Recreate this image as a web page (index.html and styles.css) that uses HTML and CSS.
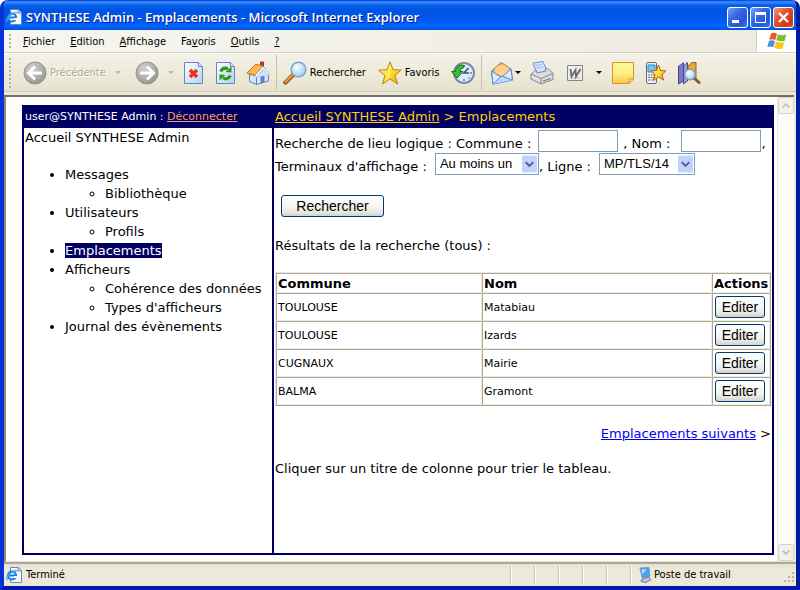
FILE: index.html
```html
<!DOCTYPE html>
<html lang="fr">
<head>
<meta charset="utf-8">
<title>SYNTHESE Admin - Emplacements</title>
<link rel="stylesheet" href="styles.css">
</head>
<body>
<svg class="defs" width="0" height="0" aria-hidden="true">
  <defs>
    <radialGradient id="disc" cx=".4" cy=".3" r=".8"><stop offset="0" stop-color="#d2d2d0"/><stop offset=".6" stop-color="#aaaaa8"/><stop offset="1" stop-color="#8b8b89"/></radialGradient>
    <linearGradient id="sheet" x2="1" y2="1"><stop offset="0" stop-color="#fff"/><stop offset="1" stop-color="#b4d0f4"/></linearGradient>
    <radialGradient id="lens" cx=".4" cy=".35" r=".7"><stop offset="0" stop-color="#fff"/><stop offset="1" stop-color="#8fd0f8"/></radialGradient>
    <linearGradient id="gold" x2="1" y2="1"><stop offset="0" stop-color="#fff6a0"/><stop offset=".5" stop-color="#ffe030"/><stop offset="1" stop-color="#f0a010"/></linearGradient>
    <linearGradient id="note" x2="0" y2="1"><stop offset="0" stop-color="#fff49a"/><stop offset=".5" stop-color="#fff08a"/><stop offset="1" stop-color="#ffc64a"/></linearGradient>
    <symbol id="ie" viewBox="0 0 16 16">
      <path d="M4.500 .5h8l3 3v12h-11z" fill="#f4f8ff" stroke="#6f86b8"/>
      <path d="M12 .5v3.500h3.500" fill="#c8d8f0" stroke="#6f86b8"/>
      <circle cx="6" cy="8.500" r="4" fill="#e8f6ff" stroke="#1c7ad8" stroke-width="2.200"/>
      <path d="M2 8.500h8" stroke="#1c7ad8" stroke-width="2"/>
      <path d="M8 10h4" stroke="#f4f8ff" stroke-width="2"/>
      <path d="M1 13C-.5 9 8 2 11.500 4" fill="none" stroke="#38a8f0" stroke-width="1.300"/>
    </symbol>
  </defs>
</svg>
<div class="window">
  <header class="titlebar">
    <svg class="i16" viewBox="0 0 16 16"><use href="#ie"/></svg>
    <h1>SYNTHESE Admin - Emplacements - Microsoft Internet Explorer</h1>
    <div class="winbtns">
      <button type="button" aria-label="Réduire"><svg viewBox="0 0 19 19"><path d="M4 12h7v3H4z" fill="#fff"/></svg></button>
      <button type="button" aria-label="Agrandir"><svg viewBox="0 0 19 19"><path d="M4 4h11v11H4zM5 7v7h9V7z" fill="#fff" fill-rule="evenodd"/></svg></button>
      <button type="button" class="close" aria-label="Fermer"><svg viewBox="0 0 19 19"><path d="M5 5l9 9M14 5l-9 9" stroke="#fff" stroke-width="2.400"/></svg></button>
    </div>
  </header>

  <nav class="menubar" aria-label="Menu">
    <span class="grip"></span>
    <button type="button"><u>F</u>ichier</button>
    <button type="button"><u>E</u>dition</button>
    <button type="button"><u>A</u>ffichage</button>
    <button type="button">Fa<u>v</u>oris</button>
    <button type="button"><u>O</u>utils</button>
    <button type="button"><u>?</u></button>
    <span class="throbber">
      <svg width="20" height="18" viewBox="0 0 20 18">
        <path d="M4 1.500Q7 0 10 1.700L8.300 8Q5.500 6.500 2.300 7.800Z" fill="#e8592a"/>
        <path d="M11 2.300Q14.500 4 19.500 2.500L17.500 9Q13.500 10 9.300 8.300Z" fill="#7cc02c"/>
        <path d="M2 8.800Q5 7.500 8 9L6.300 15.300Q3.500 13.800 .3 15Z" fill="#4a90e8"/>
        <path d="M9 9.500Q13 11 17.200 10.200L15.500 16.500Q11.500 18 7.300 15.700Z" fill="#fcc818"/>
      </svg>
    </span>
  </nav>

  <div class="toolbar" role="toolbar" aria-label="Boutons standard">
    <span class="grip"></span>
    <div class="group history">
      <button type="button" disabled><svg viewBox="0 0 24 24"><circle cx="12" cy="12" r="11" fill="url(#disc)" stroke="#91918f"/><path d="M12 5.500L5.500 12l6.500 6.500M6 12h13" fill="none" stroke="#fff" stroke-width="3"/></svg><span>Précédente</span><i class="caret"></i></button>
      <button type="button" disabled aria-label="Suivante"><svg viewBox="0 0 24 24"><circle cx="12" cy="12" r="11" fill="url(#disc)" stroke="#91918f"/><path d="M12 5.500l6.500 6.500-6.500 6.500M18 12H5" fill="none" stroke="#fff" stroke-width="3"/></svg><i class="caret"></i></button>
    </div>
    <div class="group">
      <button type="button" aria-label="Arrêter"><svg viewBox="0 0 24 24"><path d="M2.500 1.500h14l4 4v17h-18z" fill="url(#sheet)" stroke="#5f87bd"/><path d="M16.500 1.500v4h4" fill="#dcebff" stroke="#5f87bd"/><path d="M8 9l7 7M15 9l-7 7" stroke="#e83410" stroke-width="3.400"/></svg></button>
      <button type="button" aria-label="Actualiser"><svg viewBox="0 0 24 24"><path d="M2.500 1.500h14l4 4v17h-18z" fill="url(#sheet)" stroke="#5f87bd"/><path d="M16.500 1.500v4h4" fill="#dcebff" stroke="#5f87bd"/><path d="M6.500 10.500q3-5 7.500-2.500" fill="none" stroke="#2c9a18" stroke-width="3"/><path d="M11.500 11l6 .5V5.500z" fill="#2c9a18"/><path d="M16.500 14.500q-3 5-7.500 2.500" fill="none" stroke="#2c9a18" stroke-width="3"/><path d="M11.500 14l-6-.5v6z" fill="#2c9a18"/></svg></button>
      <button type="button" aria-label="Démarrage"><svg viewBox="0 0 24 24"><path d="M14.500 1h3v6h-3z" fill="#d84020" stroke="#9a3018"/><path d="M3.500 13v7.500l7 3V15zM10.500 23.500V14L17 6.500l5.500 7V20z" fill="#d4e5fc" stroke="#5e82b8"/><path d="M.8 12L10 3.200l7 2L9 14.500z" fill="#ffb54c" stroke="#c57316"/><path d="M17 5.200l6.500 8-1.500 1.300-5-6-6.500 8L9 14.500z" fill="#fff" stroke="#7898c8" stroke-width=".7"/><path d="M14.500 15.500l4-1v6.800l-4 1z" fill="#637fb8"/></svg></button>
    </div>
    <span class="sep"></span>
    <div class="group wide">
      <button type="button"><svg viewBox="0 0 24 24"><path d="M10 14l-7.500 7.500" stroke="#a65a1c" stroke-width="4.500" stroke-linecap="round"/><path d="M9.500 14L2.700 20.800" stroke="#ef9a4c" stroke-width="2" stroke-linecap="round"/><circle cx="15.500" cy="8.500" r="7.300" fill="url(#lens)" stroke="#7fa1cf" stroke-width="1.500"/></svg><span>Rechercher</span></button>
      <button type="button"><svg viewBox="0 0 24 24"><path d="M12 .8l3 7.900 8.300.3-6.400 5.300 2.700 8.700L12 18l-7.500 5 2.400-8.600L.7 9.200 9 8.800z" fill="url(#gold)" stroke="#bd8114"/><path d="M12 4v13l-5 3.500 2-6.500z" fill="#fff" opacity=".35"/></svg><span>Favoris</span></button>
      <button type="button" aria-label="Historique"><svg viewBox="0 0 24 24"><circle cx="13" cy="12" r="10" fill="#d8edfb" stroke="#758caf" stroke-width="2"/><path d="M13 4v2M21 12h-2M13 20v-2M18.500 17.500l-1-1" stroke="#c25840" stroke-width="1.500"/><path d="M17.500 7L13 12h5" fill="none" stroke="#39557c" stroke-width="1.700"/><path d="M13 4.500C8 3 4.500 6 4.500 10.500H.5L6 17l6-6.500H9Q9 7 13 6.500z" fill="#46b53a" stroke="#187018"/></svg></button>
    </div>
    <span class="sep"></span>
    <div class="group mail">
      <button type="button" aria-label="Courrier"><svg viewBox="0 0 24 24"><path d="M1.500 10L11 1.500 21 8l1.500 11L3 23z" fill="#aecbfa" stroke="#5f87ca"/><path d="M4 8q5-6 10-5l6 5-1 5-7 3-8-4z" fill="#ffd08b" stroke="#d28d3e"/><path d="M1.500 10l10 6.500L21 8l1.500 11L3 23z" fill="#dceaff" stroke="#5f87ca"/><path d="M3 23l8.500-8 11 4" fill="#bdd6ff" stroke="#5f87ca"/></svg><i class="caret"></i></button>
      <button type="button" aria-label="Imprimer"><svg viewBox="0 0 24 24"><path d="M3 2l10-1.500L17 10 7 13z" fill="#cce2ff" stroke="#7297ce"/><path d="M5 4.500l7-1M6 7l7-1" stroke="#a3c2ee"/><path d="M1 13l5-4 1 3 9-2-1-2 3-.5 5 5v6L11 23 1 18z" fill="#dedee2" stroke="#85858d"/><path d="M1 13l10 4.500 12-5M11 17.500V23" fill="none" stroke="#85858d"/><path d="M13 20l8-2.500" stroke="#707078"/></svg></button>
      <button type="button" aria-label="Modifier"><svg viewBox="0 0 24 24"><path d="M4.500 4.500h15v15h-15z" fill="#ececea" stroke="#85858b"/><path d="M7 17h10" stroke="#bdbdbd"/><path d="M7.500 8l1 7.500 4-6.500.5 6.500L17.500 8" fill="none" stroke="#686870" stroke-width="1.800"/></svg><i class="caret far"></i></button>
      <button type="button" aria-label="Discussion"><svg viewBox="0 0 24 24"><path d="M1.500 1.500h21V18L18 22.500H1.500z" fill="url(#note)" stroke="#d9971e"/><path d="M22.500 18H18v4.500z" fill="#fff2a8" stroke="#d9971e"/></svg></button>
      <button type="button" aria-label="Périphérique mobile"><svg viewBox="0 0 24 24"><rect x="2.500" y="1.500" width="10" height="21" rx="1.500" fill="#edf0f4" stroke="#626d7e"/><path d="M4 4h7v7H4z" fill="#6fc8f2" stroke="#3d87bc"/><path d="M4 14h7M4 16.500h7M4 19h7" stroke="#6d7582" stroke-dasharray="2 .5"/><path d="M14.500 4l2 5.500 5.500.3-4 3.800 1.500 5.400-5-3-5 3 1.500-5.400-4-3.800 5.500-.3z" fill="url(#gold)" stroke="#bd5b18"/></svg></button>
      <button type="button" aria-label="Recherche"><svg viewBox="0 0 24 24"><path d="M1.500 5l5-3.500V20l-5 3z" fill="#7777c6" stroke="#484892"/><path d="M6.500 5l4-3.500V20l-4 3z" fill="#9a9adf" stroke="#484892"/><path d="M1.500 4.500L6 1h4.500" stroke="#dadaf7" fill="none"/><path d="M11 5l4-3.500h4V18h-8z" fill="#e5a83a" stroke="#976417"/><path d="M17 17l5 4.500" stroke="#8b5a22" stroke-width="3" stroke-linecap="round"/><circle cx="13" cy="13.500" r="5.300" fill="url(#lens)" stroke="#8195b0" stroke-width="1.300"/></svg></button>
    </div>
  </div>

  <div class="viewport">
    <main class="page">
      <div class="topline user">user@SYNTHESE Admin : <a href="#">Déconnecter</a></div>
      <div class="topline crumbs"><a href="#">Accueil SYNTHESE Admin</a> &gt; Emplacements</div>
      <aside class="tree">
        <div>Accueil SYNTHESE Admin</div>
        <ul>
          <li>Messages<ul><li>Bibliothèque</li></ul></li>
          <li>Utilisateurs<ul><li>Profils</li></ul></li>
          <li><mark>Emplacements</mark></li>
          <li>Afficheurs<ul><li>Cohérence des données</li><li>Types d'afficheurs</li></ul></li>
          <li>Journal des évènements</li>
        </ul>
      </aside>
      <section class="content">
        <form class="search">
          <div class="row"><label for="commune">Recherche de lieu logique : Commune :</label><input id="commune" type="text"><label for="nom">, Nom :</label><input id="nom" class="last" type="text"><span class="comma">,</span></div>
          <div class="row"><label for="term">Terminaux d'affichage :</label><span class="pick"><select id="term" class="long"><option>Au moins un</option></select><svg viewBox="0 0 16 18"><rect width="16" height="18" rx="1" fill="#c1d3fb"/><path d="M4 7l4 4 4-4" fill="none" stroke="#4d6185" stroke-width="2.200"/></svg></span><label for="ligne">, Ligne :</label><span class="pick"><select id="ligne"><option>MP/TLS/14</option></select><svg viewBox="0 0 16 18"><rect width="16" height="18" rx="1" fill="#c1d3fb"/><path d="M4 7l4 4 4-4" fill="none" stroke="#4d6185" stroke-width="2.200"/></svg></span></div>
          <button class="xp submit" type="button">Rechercher</button>
        </form>
        <p class="results">Résultats de la recherche (tous) :</p>
        <table>
          <colgroup><col class="c1"><col><col class="c3"></colgroup>
          <thead><tr><th>Commune</th><th>Nom</th><th>Actions</th></tr></thead>
          <tbody>
            <tr><td>TOULOUSE</td><td>Matabiau</td><td><button class="xp" type="button">Editer</button></td></tr>
            <tr><td>TOULOUSE</td><td>Izards</td><td><button class="xp" type="button">Editer</button></td></tr>
            <tr><td>CUGNAUX</td><td>Mairie</td><td><button class="xp" type="button">Editer</button></td></tr>
            <tr><td>BALMA</td><td>Gramont</td><td><button class="xp" type="button">Editer</button></td></tr>
          </tbody>
        </table>
        <p class="next"><a href="#">Emplacements suivants</a> &gt;</p>
        <p class="hint">Cliquer sur un titre de colonne pour trier le tableau.</p>
      </section>
    </main>
    <div class="scrollbar">
      <button type="button" disabled aria-label="Haut"><svg viewBox="0 0 15 16"><path d="M4 10l3.500-3.500L11 10" fill="none" stroke="#c3c2b8" stroke-width="2"/></svg></button>
      <button type="button" disabled aria-label="Bas"><svg viewBox="0 0 15 16"><path d="M4 6l3.500 3.500L11 6" fill="none" stroke="#c3c2b8" stroke-width="2"/></svg></button>
    </div>
  </div>

  <footer class="status">
    <svg class="i16" viewBox="0 0 16 16"><use href="#ie"/></svg>
    <span class="msg">Terminé</span>
    <span class="pane"></span><span class="pane"></span><span class="pane"></span><span class="pane"></span><span class="pane"></span>
    <span class="zone"><svg class="i16" viewBox="0 0 16 16"><path d="M3 1l9-.5 1 9-8 1z" fill="#4aa3f0" stroke="#7e95c4"/><path d="M4.500 2.500l5-.3-4 5z" fill="#b4e2ff"/><path d="M5 12l6-2 3 2.500-5 3-5-1z" fill="#bcc3e6" stroke="#6d76a8"/></svg>Poste de travail</span>
    <svg class="size" viewBox="0 0 12 12"><path d="M8 0h2v2H8zM4 4h2v2H4zM8 4h2v2H8zM0 8h2v2H0zM4 8h2v2H4zM8 8h2v2H8z" fill="#b8b4a2"/></svg>
  </footer>
</div>
</body>
</html>
```
FILE: styles.css
```css
* { box-sizing: border-box; }
body { margin: 0; background: #fff; color: #000; font: 13px/19px "DejaVu Sans", Verdana, sans-serif; }
button { font: inherit; color: inherit; border: 0; padding: 0; background: none; }
p { margin: 0; }
.defs { position: absolute; }
.i16 { width: 16px; height: 16px; flex: none; }

.window {
  display: flex; flex-direction: column; min-height: 100vh; overflow: hidden;
  border: 4px solid; border-top: 0; border-color: #0831d9 #001da0 #0019a8 #0831d9;
  border-radius: 8px 8px 0 0;
  background: #ece9d8;
}
.titlebar {
  display: flex; align-items: center; height: 30px; padding: 4px 2px 0 6px; margin: 0 -4px;
  background: linear-gradient(#0831d9, #3a92ff 2px, #0560e8 5px, #0054e3 10px, #0058ee 20px, #0066ff 26px, #0050d8 30px);
}
.titlebar h1 {
  flex: 1; margin: 0 0 0 4px; color: #fff; font: 600 13px/18px "Open Sans", "Trebuchet MS", sans-serif;
  text-shadow: 1px 1px #0a1883; white-space: nowrap;
}
.winbtns { display: flex; gap: 2px; padding-right: 4px; }
.winbtns button {
  width: 21px; height: 21px; border: 1px solid #fff; border-radius: 3px;
  background: linear-gradient(135deg, #7ea3f7, #3566e3 40%, #2456d8 75%, #3c7cf6);
}
.winbtns .close { background: linear-gradient(135deg, #f0a088, #e0512c 40%, #cc3a12 80%, #e4552c); }
.winbtns svg { display: block; width: 19px; height: 19px; }

.menubar, .toolbar, .status { font: 11px/14px "DejaVu Sans Condensed", Tahoma, sans-serif; }
.grip { flex: none; width: 2px; background: repeating-linear-gradient(#b8b5a5 0 2px, transparent 2px 4px); }
.menubar {
  display: flex; align-items: center; gap: 15px; height: 23px; padding-left: 5px;
  background: linear-gradient(90deg, #f6f5ef, #edebe0); border-bottom: 1px solid #d5d2bd;
}
.menubar .grip { height: 14px; margin-right: -3px; }
.menubar button { padding-top: 2px; }
.throbber {
  align-self: stretch; display: grid; place-items: center; width: 40px; margin-left: auto;
  background: #fff; border-left: 1px solid #d5d2bd;
}
.toolbar {
  display: flex; align-items: center; height: 39px; padding-left: 5px; margin-bottom: 3px;
  background: linear-gradient(#f4f2e8, #ece9d8 60%, #e6e2cf); border-top: 1px solid #fff; border-bottom: 1px solid #d0ccb8;
}
.toolbar .grip { height: 30px; margin-right: 12px; }
.toolbar svg { display: block; width: 24px; height: 24px; flex: none; }
.toolbar button { display: flex; align-items: center; gap: 3px; white-space: nowrap; }
.toolbar button:disabled { color: #aca899; text-shadow: 1px 1px #fff; }
.group { display: flex; gap: 8px; }
.group.history { gap: 14px; margin-right: 8px; }
.group.wide { gap: 12px; }
.group.mail { gap: 9px; margin-left: 2px; }
.caret { width: 6px; border: 3px solid transparent; border-top-color: #000; border-bottom: 0; margin-left: -2px; }
.caret.far { margin-left: 6px; }
.history .caret { margin-left: 6px; border-top-color: #bbb8a8; }
.sep { width: 1px; height: 35px; margin: 0 6px; background: #c5c2b0; }

.viewport {
  flex: 1; display: flex; background: #fff; margin-right: 2px;
  border-top: 2px solid #716f64; border-left: 2px solid #8c897a; border-bottom: 1px solid #e3e0cf;
}
.page {
  flex: 1; display: grid; grid-template-columns: 250px 1fr; grid-template-rows: 21px 1fr;
  margin: 8px 3px 6px 16px; border: 2px solid #000063;
}
.topline { background: #000063; color: #fff; padding-left: 1px; white-space: nowrap; height: 21px; }
.user { font-size: 11px; }
.user a { color: #ff9c63; }
.crumbs, .crumbs a { color: #ffce00; }
.tree { border-right: 2px solid #000063; padding-left: 1px; }
.tree ul { margin: 18px 0 0; padding-left: 40px; }
.tree ul ul { margin: 0; }
.tree mark { background: #000063; color: #fff; }
.content { padding: 1px 1px 0; }
.row { display: flex; align-items: center; height: 23px; white-space: nowrap; }
.row input, .row select {
  width: 80px; height: 22px; border: 1px solid #7f9db9; background: #fff; border-radius: 0; padding: 0 4px; margin: 0 5px 0 7px;
}
.row .last { margin: 0 0 0 11px; }
.row label, .comma { padding-top: 5px; }
.pick { position: relative; display: flex; margin-left: 8px; }
.row .pick select { width: 96px; margin: 0; appearance: none; color: #000; font: 13px/18px "Liberation Sans", Arial, sans-serif; }
.row .pick .long { width: 104px; }
.pick svg { position: absolute; right: 2px; top: 2px; width: 15px; height: 18px; pointer-events: none; }
.xp {
  display: block; width: 50px; height: 22px; border: 1px solid #003c74; border-radius: 3px;
  background: linear-gradient(#fff, #f3f3ef 60%, #e4e2da 85%, #d6d0c5); color: #000;
  font: 14px/18px "Liberation Sans", Arial, sans-serif;
}
.submit { width: 103px; margin: 20px 6px 19px; }
.results { margin-bottom: 17px; }
table {
  width: 100%; border-collapse: separate; border-spacing: 0; table-layout: fixed;
  border: 1px solid; border-color: #ece9d8 #aca899 #aca899 #ece9d8;
}
.c1 { width: 206px; }
.c3 { width: 58px; }
th, td { border: 1px solid; border-color: #aca899 #ece9d8 #ece9d8 #aca899; padding: 0 1px; text-align: left; }
th { height: 20px; padding-top: 1px; line-height: 17px; font-weight: bold; white-space: nowrap; }
td { height: 28px; font-size: 11px; }
td:last-child { padding-left: 2px; }
.next { margin: 18px 0 16px; text-align: right; }
.next a { color: #0000f0; }

.scrollbar { width: 17px; display: flex; flex-direction: column; justify-content: space-between; background: #fdfdf9; border-left: 1px solid #eeede5; }
.scrollbar button { width: 16px; height: 17px; border: 1px solid #d8d6cc; border-radius: 2px; background: #f2f1ea; }
.scrollbar svg { display: block; width: 14px; height: 15px; }

.status {
  display: flex; align-items: center; height: 24px; padding-left: 2px;
  border-top: 2px solid #aca899; background: linear-gradient(#e4e1d0, #ece9d8 5px);
}
.msg { flex: 1; margin-left: 4px; }
.pane, .zone { height: 18px; border-left: 1px solid #c9c6b4; box-shadow: inset 1px 0 #fff; }
.pane { width: 24px; }
.zone { display: flex; align-items: center; gap: 1px; width: 166px; padding-left: 6px; }
.size { width: 12px; height: 12px; margin: 6px 0 0 -12px; }
```
